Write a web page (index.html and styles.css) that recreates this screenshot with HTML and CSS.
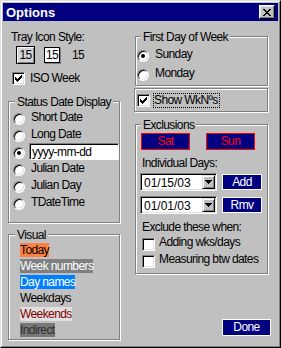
FILE: index.html
```html
<!DOCTYPE html>
<html>
<head>
<meta charset="utf-8">
<link rel="stylesheet" href="styles.css">
</head>
<body>
<div class="window">
  <div class="frame">
    <div class="titlebar">
      <span class="title">Options</span>
      <span class="close">
        <svg width="8" height="7" viewBox="0 0 8 7" shape-rendering="crispEdges"><path fill="#000" d="M0 0h2v1h-2z M6 0h2v1h-2z M1 1h2v1h-2z M5 1h2v1h-2z M2 2h4v1h-4z M3 3h2v1h-2z M2 4h4v1h-4z M1 5h2v1h-2z M5 5h2v1h-2z M0 6h2v1h-2z M6 6h2v1h-2z"/></svg>
      </span>
    </div>
    <div class="content">
      <div class="col-left">
        <div class="label tray">Tray Icon Style:</div>
        <div class="icons">
          <span class="ico ico-raised">15</span>
          <span class="ico ico-flat">15</span>
          <span class="ico-text">15</span>
        </div>
        <div class="check-row iso">
          <span class="cb"><svg width="7" height="7" viewBox="0 0 7 7" shape-rendering="crispEdges"><path fill="#000" d="M6 0h1v1h-1z M5 1h2v1h-2z M0 2h1v1h-1z M4 2h3v1h-3z M0 3h2v1h-2z M3 3h3v1h-3z M0 4h5v1h-5z M1 5h3v1h-3z M2 6h1v1h-1z"/></svg></span>
          <span class="cb-text">ISO Week</span>
        </div>

        <div class="group status">
          <div class="group-label">Status Date Display</div>
          <div class="radio-row"><span class="radio"></span><span class="r-text">Short Date</span></div>
          <div class="radio-row"><span class="radio"></span><span class="r-text">Long Date</span></div>
          <div class="radio-row"><span class="radio on"></span><span class="field">yyyy-mm-dd</span></div>
          <div class="radio-row"><span class="radio"></span><span class="r-text">Julian Date</span></div>
          <div class="radio-row"><span class="radio"></span><span class="r-text">Julian Day</span></div>
          <div class="radio-row"><span class="radio"></span><span class="r-text">TDateTime</span></div>
        </div>

        <div class="group visual">
          <div class="group-label">Visual</div>
          <div class="vis-row"><span class="v-today">Today</span></div>
          <div class="vis-row"><span class="v-week">Week numbers</span></div>
          <div class="vis-row"><span class="v-days">Day names</span></div>
          <div class="vis-row"><span class="v-weekdays">Weekdays</span></div>
          <div class="vis-row"><span class="v-weekends">Weekends</span></div>
          <div class="vis-row"><span class="v-indirect">Indirect</span></div>
        </div>
      </div>

      <div class="col-right">
        <div class="group firstday">
          <div class="group-label">First Day of Week</div>
          <div class="radio-row"><span class="radio on"></span><span class="r-text">Sunday</span></div>
          <div class="radio-row gap2"><span class="radio"></span><span class="r-text">Monday</span></div>
        </div>

        <div class="panel">
          <span class="cb"><svg width="7" height="7" viewBox="0 0 7 7" shape-rendering="crispEdges"><path fill="#000" d="M6 0h1v1h-1z M5 1h2v1h-2z M0 2h1v1h-1z M4 2h3v1h-3z M0 3h2v1h-2z M3 3h3v1h-3z M0 4h5v1h-5z M1 5h3v1h-3z M2 6h1v1h-1z"/></svg></span>
          <span class="focus-text">Show WkNºs</span>
        </div>

        <div class="group excl">
          <div class="group-label">Exclusions</div>
          <div class="day-btns">
            <span class="day-btn">Sat</span>
            <span class="day-btn">Sun</span>
          </div>
          <div class="label indiv">Individual Days:</div>
          <div class="combo-row first">
            <span class="combo"><span class="combo-text">01/15/03</span><span class="drop"><svg width="7" height="4" viewBox="0 0 7 4" shape-rendering="crispEdges"><path fill="#000" d="M0 0h7v1h-7z M1 1h5v1h-5z M2 2h3v1h-3z M3 3h1v1h-1z"/></svg></span></span>
            <span class="nav-btn">Add</span>
          </div>
          <div class="combo-row second">
            <span class="combo"><span class="combo-text">01/01/03</span><span class="drop"><svg width="7" height="4" viewBox="0 0 7 4" shape-rendering="crispEdges"><path fill="#000" d="M0 0h7v1h-7z M1 1h5v1h-5z M2 2h3v1h-3z M3 3h1v1h-1z"/></svg></span></span>
            <span class="nav-btn">Rmv</span>
          </div>
          <div class="label exclude">Exclude these when:</div>
          <div class="check-row sub"><span class="cb"></span><span class="cb-text">Adding wks/days</span></div>
          <div class="check-row sub"><span class="cb"></span><span class="cb-text">Measuring btw dates</span></div>
        </div>

        <span class="nav-btn done">Done</span>
      </div>
    </div>
  </div>
</div>
</body>
</html>
```

FILE: styles.css
```css
* { box-sizing: border-box; }

html, body {
  margin: 0;
  padding: 0;
}

body {
  width: 281px;
  height: 348px;
  background: #c0c0c0;
  font-family: "Liberation Sans", Arial, sans-serif;
  font-size: 12px;
  line-height: 14px;
  letter-spacing: -0.6px;
  color: #000;
  overflow: hidden;
}

.window {
  width: 281px;
  height: 348px;
  border: 1px solid;
  border-color: #dfdfdf #000 #000 #dfdfdf;
  background: #c0c0c0;
  display: flex;
  flex-direction: column;
}

.frame {
  flex: 1;
  border: 1px solid;
  border-color: #fff #808080 #808080 #fff;
  padding: 1px;
  display: flex;
  flex-direction: column;
}

.titlebar {
  height: 18px;
  background: #000080;
  display: flex;
  align-items: center;
  justify-content: space-between;
  padding: 0 3px 0 3px;
}

.title {
  color: #fff;
  font-weight: bold;
  font-size: 13px;
  line-height: 18px;
  letter-spacing: 0;
  padding-top: 1px;
}

.close {
  width: 16px;
  height: 14px;
  background: #c0c0c0;
  border: 1px solid;
  border-color: #fff #000 #000 #fff;
  box-shadow: inset -1px -1px 0 #808080, inset 1px 1px 0 #dfdfdf;
  display: flex;
  align-items: center;
  justify-content: center;
}

.content {
  flex: 1;
  display: flex;
  padding: 9px 7px 0 5px;
  gap: 15px;
}

.col-left {
  width: 112px;
  display: flex;
  flex-direction: column;
}

.col-right {
  width: 136px;
  display: flex;
  flex-direction: column;
}

.label { line-height: 14px; }
.tray { margin-left: 3px; }

.icons {
  margin-top: 2px;
  height: 18px;
  display: flex;
  align-items: center;
}

.ico {
  display: flex;
  align-items: center;
  justify-content: center;
  font-size: 12px;
  line-height: 12px;
}

.ico-raised {
  margin-left: 8px;
  width: 19px;
  height: 18px;
  border: 1px solid #000;
  background: #d4d4d4;
  box-shadow: inset 1px 1px 0 #fff, inset -1px -1px 0 #808080;
}

.ico-flat {
  margin-left: 9px;
  width: 16px;
  height: 16px;
  border: 1px solid #000;
  background: #fff;
  box-shadow: 1px 1px 0 #808080;
}

.ico-text {
  margin-left: 12px;
}

/* checkboxes */
.check-row {
  display: flex;
  height: 17px;
  line-height: 17px;
}

.iso {
  margin-top: 6px;
  padding-left: 4px;
}

.cb {
  width: 13px;
  height: 13px;
  margin-top: 2px;
  flex: none;
  background: #fff;
  border: 1px solid;
  border-color: #808080 #fff #fff #808080;
  box-shadow: inset 1px 1px 0 #000, inset -1px -1px 0 #dfdfdf;
  display: flex;
  align-items: center;
  justify-content: center;
}

.cb-text { margin-left: 5px; }

/* groups */
.group {
  position: relative;
  border: 1px solid #808080;
  box-shadow: inset 1px 1px 0 #fff, 1px 1px 0 #fff;
}

.group-label {
  position: absolute;
  top: -7px;
  left: 6px;
  background: #c0c0c0;
  padding: 0 2px;
  line-height: 14px;
  white-space: nowrap;
}

.status {
  margin-top: 14px;
  width: 112px;
  padding: 7px 0 11px 4px;
}

.radio-row {
  display: flex;
  height: 17px;
  line-height: 17px;
}

.radio {
  position: relative;
  width: 12px;
  height: 12px;
  margin-top: 4px;
  flex: none;
  border-radius: 50%;
  background: #fff;
  border: 1px solid;
  border-color: #808080 #fff #fff #808080;
  box-shadow: inset 1px 1px 0 #000, inset -1px -1px 0 #dfdfdf;
}

.radio.on::after {
  content: "";
  position: absolute;
  left: 3px;
  top: 3px;
  width: 4px;
  height: 4px;
  border-radius: 50%;
  background: #000;
}

.r-text { margin-left: 6px; }

.field {
  margin-left: 4px;
  width: 90px;
  height: 17px;
  line-height: 14px;
  background: #fff;
  border: 1px solid;
  border-color: #808080 #fff #fff #808080;
  box-shadow: inset 1px 1px 0 #000;
  padding: 1px 0 0 2px;
}

.visual {
  margin-top: 11px;
  width: 112px;
  padding: 7px 0 1px 11px;
}

.vis-row {
  line-height: 16px;
  height: 16px;
}

.v-today { background: #ff7f40; color: #000; }
.v-week { background: #808080; color: #fff; }
.v-days { background: #0080ff; color: #fff; }
.v-weekdays { color: #000; }
.v-weekends { background: #e0e0e0; color: #800000; }
.v-indirect { background: #787878; color: #303030; }

/* right column */
.firstday {
  margin-top: 6px;
  width: 133px;
  padding: 9px 0 3px 1px;
}

.firstday .group-label { left: 5px; }

.gap2 { margin-top: 2px; }

.panel {
  margin-top: 2px;
  margin-left: -1px;
  width: 134px;
  height: 24px;
  border: 1px solid #808080;
  box-shadow: inset 1px 1px 0 #fff, 1px 1px 0 #fff;
  display: flex;
  align-items: center;
  padding-left: 2px;
}

.panel .cb { margin-top: 1px; }

.focus-text {
  margin-left: 3px;
  height: 15px;
  line-height: 13px;
  border: 1px dotted #000;
  padding: 0 1px 0 0;
}

.excl {
  margin-top: 12px;
  width: 133px;
  padding: 8px 0 5px 5px;
}

.excl .group-label { left: 5px; }

.day-btns {
  display: flex;
  gap: 16px;
}

.day-btn {
  width: 49px;
  height: 17px;
  background: #000080;
  border: 1px solid #ff0000;
  color: #ff0000;
  text-align: center;
  line-height: 15px;
}

.indiv {
  margin-top: 6px;
  margin-left: 1px;
}

.combo-row {
  display: flex;
  align-items: center;
}

.combo-row.first { margin-top: 3px; }
.combo-row.second { margin-top: 5px; }

.combo {
  margin-left: -1px;
  width: 77px;
  height: 18px;
  display: flex;
  background: #fff;
  border: 1px solid;
  border-color: #808080 #fff #fff #808080;
  box-shadow: inset 1px 1px 0 #000, inset -1px -1px 0 #dfdfdf;
  padding: 1px 1px 1px 1px;
}

.combo-text {
  flex: 1;
  letter-spacing: 0;
  line-height: 15px;
  padding-left: 2px;
  padding-top: 1px;
}

.drop {
  width: 13px;
  height: 14px;
  background: #c0c0c0;
  border: 1px solid;
  border-color: #dfdfdf #000 #000 #dfdfdf;
  box-shadow: inset 1px 1px 0 #fff, inset -1px -1px 0 #808080;
  display: flex;
  align-items: center;
  justify-content: center;
}

.nav-btn {
  margin-left: 5px;
  width: 40px;
  height: 16px;
  background: #000080;
  border: 1px solid #fff;
  color: #fff;
  text-align: center;
  line-height: 14px;
  font-size: 12px;
}

.exclude {
  margin-top: 6px;
  margin-left: 1px;
}

.check-row.sub {
  padding-left: 1px;
}

.check-row.sub .cb { margin-top: 4px; }
.check-row.sub .cb-text { margin-left: 4px; }

.done {
  margin-top: auto;
  margin-bottom: 9px;
  align-self: flex-end;
  width: 49px;
  height: 17px;
  line-height: 15px;
}
```
